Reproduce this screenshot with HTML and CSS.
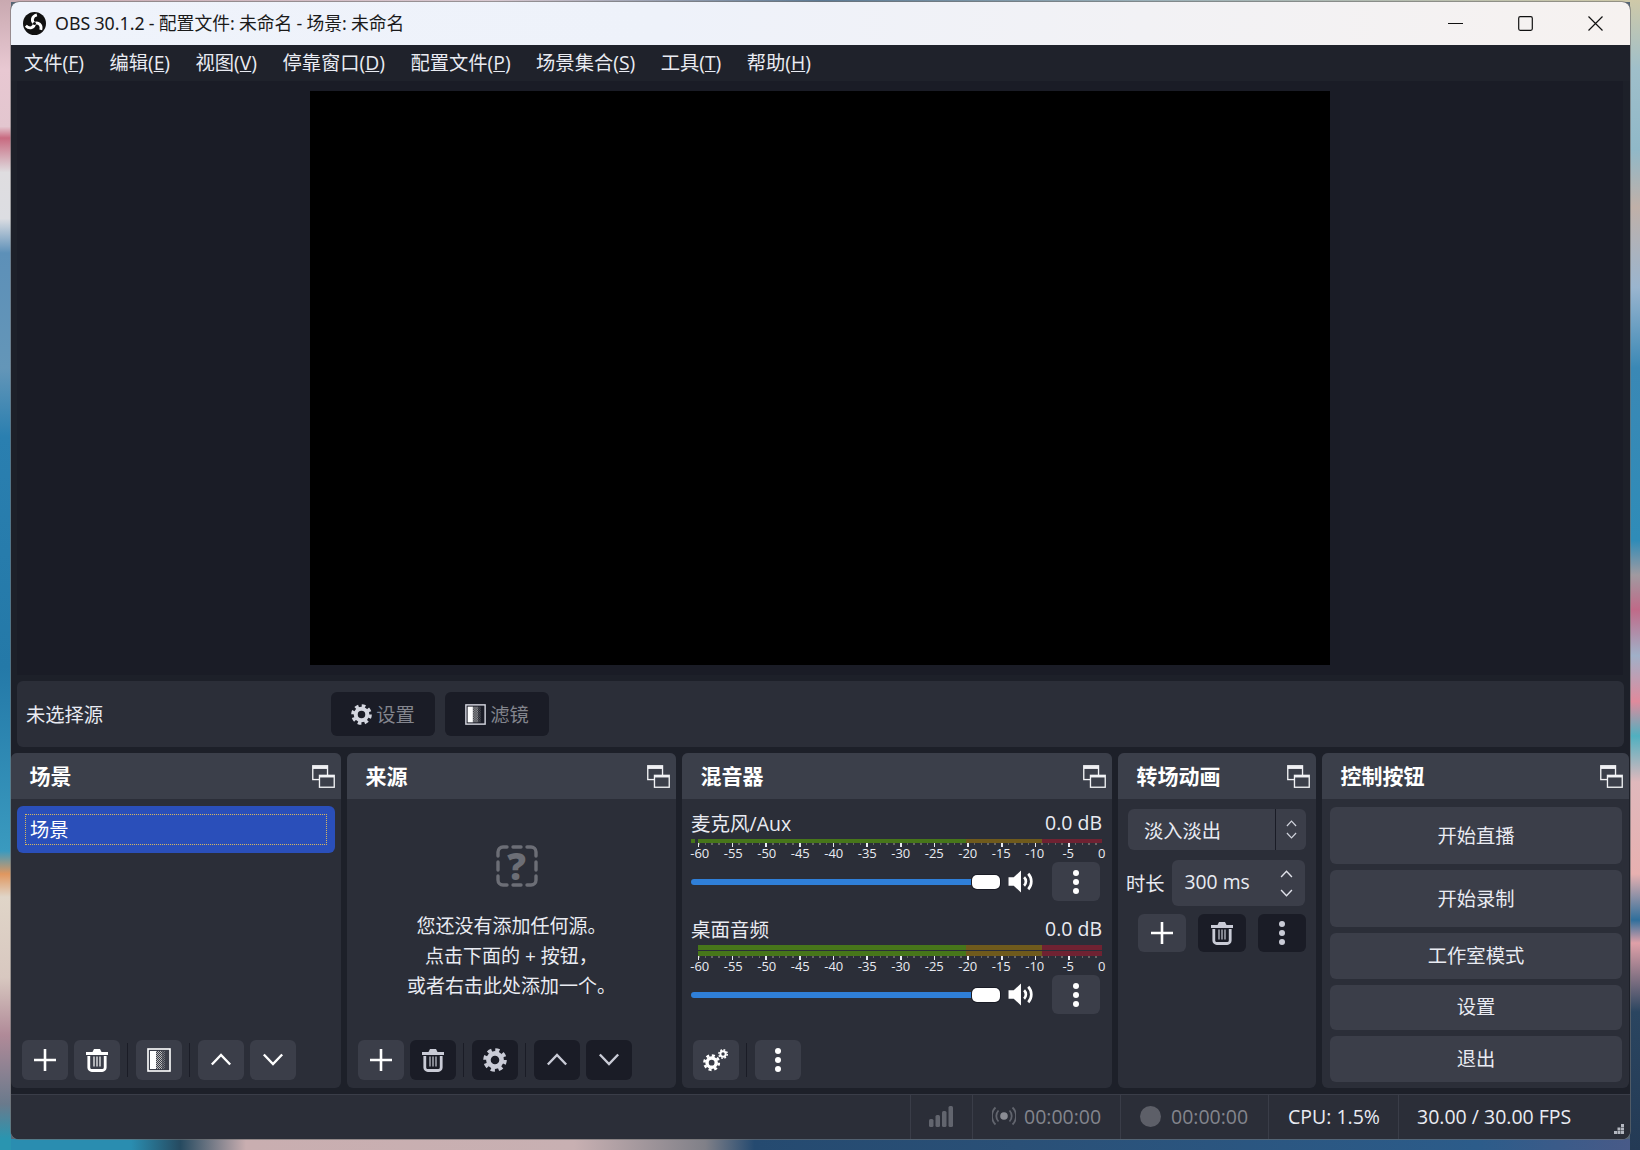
FILE: index.html
```html
<!DOCTYPE html>
<html lang="zh-CN">

<head>
    <meta charset="UTF-8">
    <title>OBS 30.1.2</title>
    <link rel="stylesheet" href="styles.css">
</head>

<body>
    <svg class="defs" width="0" height="0">
        <defs>
            <symbol id="i-plus" viewBox="0 0 24 24"><path d="M12 1v22M1 12h22" fill="none" stroke="currentColor" stroke-width="2.6"/></symbol>
            <symbol id="i-up" viewBox="0 0 24 14"><path d="M2 12.5 12 2l10 10.5" fill="none" stroke="currentColor" stroke-width="2.6"/></symbol>
            <symbol id="i-down" viewBox="0 0 24 14"><path d="M2 1.5 12 12 22 1.5" fill="none" stroke="currentColor" stroke-width="2.6"/></symbol>
            <symbol id="i-trash" viewBox="0 0 24 24">
                <path d="M1 5.500h22" stroke="currentColor" stroke-width="3" fill="none"/>
                <path d="M7.500 4 9 1h6l1.500 3" fill="currentColor"/>
                <path d="M3.800 8v11.500a3 3 0 0 0 3 3h10.400a3 3 0 0 0 3-3V8" stroke="currentColor" stroke-width="2.800" fill="none"/>
                <path d="M9 8.500v10M12 8.500v10M15 8.500v10" stroke="currentColor" stroke-width="1.200" fill="none"/>
            </symbol>
            <symbol id="i-gear" viewBox="0 0 24 24">
                <circle cx="12" cy="12" r="6.6" fill="none" stroke="currentColor" stroke-width="4.6"/>
                <circle cx="12" cy="12" r="10" fill="none" stroke="currentColor" stroke-width="3.6" stroke-dasharray="4.2 3.65"/>
            </symbol>
            <symbol id="i-gears" viewBox="0 0 26 24">
                <g transform="translate(0 6) scale(.72)">
                    <circle cx="12" cy="12" r="6.4" fill="none" stroke="currentColor" stroke-width="4.8"/>
                    <circle cx="12" cy="12" r="10" fill="none" stroke="currentColor" stroke-width="3.6" stroke-dasharray="4.2 3.65"/>
                </g>
                <g transform="translate(15 1) scale(.42)">
                    <circle cx="12" cy="12" r="6.4" fill="none" stroke="currentColor" stroke-width="4.8"/>
                    <circle cx="12" cy="12" r="10" fill="none" stroke="currentColor" stroke-width="3.6" stroke-dasharray="4.2 3.65"/>
                </g>
            </symbol>
            <pattern id="dither" width="2" height="2" patternUnits="userSpaceOnUse">
                <rect width="1" height="1" fill="#bbb"/>
                <rect x="1" y="1" width="1" height="1" fill="#bbb"/>
            </pattern>
            <symbol id="i-filter" viewBox="0 0 24 24">
                <rect x="1" y="1" width="22" height="22" fill="none" stroke="currentColor" stroke-width="1.600"/>
                <rect x="3" y="3" width="6" height="18" fill="#fff"/>
                <rect x="9" y="3" width="6" height="18" fill="url(#dither)"/>
                <rect x="15" y="3" width="3" height="18" fill="url(#dither)" opacity=".4"/>
            </symbol>
            <symbol id="i-dots" viewBox="0 0 8 26">
                <circle cx="4" cy="4" r="3" fill="currentColor"/>
                <circle cx="4" cy="13" r="3" fill="currentColor"/>
                <circle cx="4" cy="22" r="3" fill="currentColor"/>
            </symbol>
            <symbol id="i-float" viewBox="0 0 24 24">
                <rect x=".8" y=".8" width="15.4" height="14.4" fill="none" stroke="currentColor" stroke-width="1.4"/>
                <path d="M1 2.6h15" stroke="currentColor" stroke-width="3"/>
                <rect x="7.8" y="10.8" width="15.4" height="12.4" fill="#3b3f4a" stroke="currentColor" stroke-width="1.4"/>
                <path d="M8 12h15" stroke="currentColor" stroke-width="2"/>
            </symbol>
            <symbol id="i-speaker" viewBox="0 0 26 22">
                <path d="M.5 7h5L12.500.5v21L5.500 15h-5z" fill="currentColor"/>
                <path d="M15.500 7a5.500 5.500 0 0 1 0 8M19.500 3.500a11 11 0 0 1 0 15" fill="none" stroke="currentColor" stroke-width="2.600"/>
            </symbol>
        </defs>
    </svg>

    <div class="window">
        <div class="titlebar">
            <svg class="logo" viewBox="0 0 24 24">
                <circle cx="12" cy="12" r="12" fill="#111"/>
                <g fill="none" stroke="#fff" stroke-width="3">
                    <path d="M12 12C8.500 9.500 9 4.500 14.500 3"/>
                    <path d="M12 12C8.500 9.500 9 4.500 14.500 3" transform="rotate(120 12 12)"/>
                    <path d="M12 12C8.500 9.500 9 4.500 14.500 3" transform="rotate(240 12 12)"/>
                </g>
                <circle cx="12" cy="12" r="1.600" fill="#111"/>
            </svg>
            <span class="title-text">OBS 30.1.2 - 配置文件: 未命名 - 场景: 未命名</span>
            <div class="win-controls">
                <div class="win-btn"><svg width="15" height="15" viewBox="0 0 15 15"><path d="M0 7.500h15" stroke="#111" stroke-width="1"/></svg></div>
                <div class="win-btn"><svg width="15" height="15" viewBox="0 0 15 15"><rect x=".7" y=".7" width="13.600" height="13.600" rx="1.500" fill="none" stroke="#111" stroke-width="1.200"/></svg></div>
                <div class="win-btn"><svg width="15" height="15" viewBox="0 0 15 15"><path d="M.5.500l14 14M14.500.500l-14 14" stroke="#111" stroke-width="1.200"/></svg></div>
            </div>
        </div>

        <div class="menubar">
            <span>文件(<u>F</u>)</span>
            <span>编辑(<u>E</u>)</span>
            <span>视图(<u>V</u>)</span>
            <span>停靠窗口(<u>D</u>)</span>
            <span>配置文件(<u>P</u>)</span>
            <span>场景集合(<u>S</u>)</span>
            <span>工具(<u>T</u>)</span>
            <span>帮助(<u>H</u>)</span>
        </div>

        <div class="content">
            <div class="preview-dock">
                <div class="preview"></div>
            </div>

            <div class="context-bar">
                <div class="context-label">未选择源</div>
                <div class="context-btn"><svg class="ico-md"><use href="#i-gear"/></svg>设置</div>
                <div class="context-btn"><svg class="ico-md"><use href="#i-filter"/></svg>滤镜</div>
            </div>

            <div class="docks">
                <section class="dock dock-scenes">
                    <header class="dock-head"><span>场景</span><svg class="ico-float"><use href="#i-float"/></svg></header>
                    <div class="dock-body scenes-body">
                        <div class="scene-item"><div class="scene-focus">场景</div></div>
                    </div>
                    <div class="toolbar">
                        <div class="tool-btn"><svg class="ico-tool"><use href="#i-plus"/></svg></div>
                        <div class="tool-btn"><svg class="ico-tool"><use href="#i-trash"/></svg></div>
                        <div class="tool-sep"></div>
                        <div class="tool-btn"><svg class="ico-tool"><use href="#i-filter"/></svg></div>
                        <div class="tool-sep"></div>
                        <div class="tool-btn"><svg class="ico-chev"><use href="#i-up"/></svg></div>
                        <div class="tool-btn"><svg class="ico-chev"><use href="#i-down"/></svg></div>
                    </div>
                </section>

                <section class="dock dock-sources">
                    <header class="dock-head"><span>来源</span><svg class="ico-float"><use href="#i-float"/></svg></header>
                    <div class="dock-body sources-body">
                        <div class="empty-icon">
                            <svg viewBox="0 0 42 42">
                                <g fill="none" stroke="#6c6e76" stroke-width="3.400" stroke-linecap="round">
                                    <path d="M2 11V7a5 5 0 0 1 5-5h4M31 2h4a5 5 0 0 1 5 5v4M40 31v4a5 5 0 0 1-5 5h-4M11 40H7a5 5 0 0 1-5-5v-4"/>
                                    <path d="M17 2h8M17 40h8M2 17v8M40 17v8"/>
                                </g>
                            </svg>
                            <span class="empty-mark">?</span>
                        </div>
                        <p class="empty-text">您还没有添加任何源。<br>点击下面的 + 按钮，<br>或者右击此处添加一个。</p>
                    </div>
                    <div class="toolbar">
                        <div class="tool-btn"><svg class="ico-tool"><use href="#i-plus"/></svg></div>
                        <div class="tool-btn off"><svg class="ico-tool"><use href="#i-trash"/></svg></div>
                        <div class="tool-sep"></div>
                        <div class="tool-btn off"><svg class="ico-tool"><use href="#i-gear"/></svg></div>
                        <div class="tool-sep"></div>
                        <div class="tool-btn off"><svg class="ico-chev"><use href="#i-up"/></svg></div>
                        <div class="tool-btn off"><svg class="ico-chev"><use href="#i-down"/></svg></div>
                    </div>
                </section>

                <section class="dock dock-mixer">
                    <header class="dock-head"><span>混音器</span><svg class="ico-float"><use href="#i-float"/></svg></header>
                    <div class="dock-body mixer-body">
                        <div class="strip">
                            <div class="strip-name"><span>麦克风/Aux</span><span>0.0 dB</span></div>
                            <div class="meter mono">
                                <div class="meter-row"><i class="stub"></i><i class="seg-g"></i><i class="seg-y"></i><i class="seg-r"></i></div>
                            </div>
                            <div class="ticks"></div>
                            <div class="scale"><span>-60</span><span>-55</span><span>-50</span><span>-45</span><span>-40</span><span>-35</span><span>-30</span><span>-25</span><span>-20</span><span>-15</span><span>-10</span><span>-5</span><span>0</span></div>
                            <div class="strip-ctrl">
                                <div class="slider"><div class="track"></div><div class="handle"></div></div>
                                <svg class="ico-speaker"><use href="#i-speaker"/></svg>
                                <div class="tool-btn strip-menu"><svg class="ico-dots"><use href="#i-dots"/></svg></div>
                            </div>
                        </div>
                        <div class="strip">
                            <div class="strip-name"><span>桌面音频</span><span>0.0 dB</span></div>
                            <div class="meter">
                                <div class="meter-row"><i class="seg-g"></i><i class="seg-y"></i><i class="seg-r"></i></div>
                                <div class="meter-row"><i class="seg-g"></i><i class="seg-y"></i><i class="seg-r"></i></div>
                            </div>
                            <div class="ticks"></div>
                            <div class="scale"><span>-60</span><span>-55</span><span>-50</span><span>-45</span><span>-40</span><span>-35</span><span>-30</span><span>-25</span><span>-20</span><span>-15</span><span>-10</span><span>-5</span><span>0</span></div>
                            <div class="strip-ctrl">
                                <div class="slider"><div class="track"></div><div class="handle"></div></div>
                                <svg class="ico-speaker"><use href="#i-speaker"/></svg>
                                <div class="tool-btn strip-menu"><svg class="ico-dots"><use href="#i-dots"/></svg></div>
                            </div>
                        </div>
                    </div>
                    <div class="toolbar">
                        <div class="tool-btn"><svg class="ico-gears"><use href="#i-gears"/></svg></div>
                        <div class="tool-sep"></div>
                        <div class="tool-btn"><svg class="ico-dots"><use href="#i-dots"/></svg></div>
                    </div>
                </section>

                <section class="dock dock-transitions">
                    <header class="dock-head"><span>转场动画</span><svg class="ico-float"><use href="#i-float"/></svg></header>
                    <div class="dock-body transitions-body">
                        <div class="combo">
                            <div class="combo-text">淡入淡出</div>
                            <div class="combo-arrows">
                                <svg class="ico-tiny"><use href="#i-up"/></svg>
                                <svg class="ico-tiny"><use href="#i-down"/></svg>
                            </div>
                        </div>
                        <div class="duration">
                            <span>时长</span>
                            <div class="spin">
                                <div class="spin-text">300 ms</div>
                                <div class="spin-arrows">
                                    <svg class="ico-small"><use href="#i-up"/></svg>
                                    <svg class="ico-small"><use href="#i-down"/></svg>
                                </div>
                            </div>
                        </div>
                        <div class="transition-tools">
                            <div class="tool-btn"><svg class="ico-tool"><use href="#i-plus"/></svg></div>
                            <div class="tool-btn off"><svg class="ico-tool"><use href="#i-trash"/></svg></div>
                            <div class="tool-btn off"><svg class="ico-dots"><use href="#i-dots"/></svg></div>
                        </div>
                    </div>
                </section>

                <section class="dock dock-controls">
                    <header class="dock-head"><span>控制按钮</span><svg class="ico-float"><use href="#i-float"/></svg></header>
                    <div class="dock-body controls-body">
                        <div class="ctrl-btn tall">开始直播</div>
                        <div class="ctrl-btn tall">开始录制</div>
                        <div class="ctrl-btn">工作室模式</div>
                        <div class="ctrl-btn">设置</div>
                        <div class="ctrl-btn">退出</div>
                    </div>
                </section>
            </div>

            <div class="statusbar">
                <div class="stat stat-bars">
                    <svg width="24" height="21" viewBox="0 0 24 21" fill="#62656e">
                        <rect x="0" y="13" width="4.500" height="8" rx="1.500"/>
                        <rect x="6.500" y="9" width="4.500" height="12" rx="1.500"/>
                        <rect x="13" y="5" width="4.500" height="16" rx="1.500"/>
                        <rect x="19.500" y="0" width="4.500" height="21" rx="1.500"/>
                    </svg>
                </div>
                <div class="stat stat-time dim">
                    <svg width="24" height="22" viewBox="0 0 24 22" fill="none" stroke="#62656e" stroke-width="1.800">
                        <circle cx="12" cy="11" r="3.800" fill="#8a8c94" stroke="none"/>
                        <path d="M6.500 5.500a8 8 0 0 0 0 11M17.500 5.500a8 8 0 0 1 0 11M3.500 2.500a12 12 0 0 0 0 17M20.500 2.500a12 12 0 0 1 0 17"/>
                    </svg>
                    <span>00:00:00</span>
                </div>
                <div class="stat stat-time dim">
                    <div class="rec-dot"></div>
                    <span>00:00:00</span>
                </div>
                <div class="stat stat-cpu">CPU: 1.5%</div>
                <div class="stat stat-fps">30.00 / 30.00 FPS</div>
                <svg class="grip" width="10" height="10" viewBox="0 0 10 10" fill="#b4b7c0">
                    <rect x="7" y="0" width="3" height="3"/>
                    <rect x="3.500" y="3.500" width="3" height="3"/><rect x="7" y="3.500" width="3" height="3"/>
                    <rect x="0" y="7" width="3" height="3"/><rect x="3.500" y="7" width="3" height="3"/><rect x="7" y="7" width="3" height="3"/>
                </svg>
            </div>
        </div>
    </div>
</body>

</html>
```

FILE: styles.css
```css
* {
    box-sizing: border-box;
}

html,
body {
    margin: 0;
    height: 100%;
    overflow: hidden;
}

/* desktop wallpaper, only the strips round the window show */
body {
    padding: 2px 10px 0 11px;
    font-family: "Open Sans", "Noto Sans CJK SC", sans-serif;
    font-size: 19.3px;
    color: #e9ebf2;
    background-color: #567;
    background-image:
        linear-gradient(180deg, #c9a9b0 0, #e8c8d2 6%, #e3c6cf 11%, #c86a80 12%, #dfdde0 15%, #dcdde2 19%, #5d90b8 22%, #6496b8 32%, #2a7fb0 38%, #2479a8 58%, #3a9abf 74%, #e0975f 76%, #e0d5c8 78%, #d8c8c0 85%, #b08a98 90%, #6a7a8c 96%, #2a95b0 99%),
        linear-gradient(180deg, #cfc9a8 0, #9fbfca 6%, #90b8c8 13%, #c0b0a8 18%, #9ab5cf 25%, #3a88b5 32%, #2f8cb8 47%, #a09aa0 50%, #c06a88 53%, #a0b0c8 57%, #e08a9c 61%, #50b0c0 64%, #e0b8bc 68%, #e8b0b0 76%, #2f6f9c 80%, #e0a0a8 82%, #2a4560 88%, #243a55 100%),
        linear-gradient(90deg, #2a8db0 0, #2a8db0 8%, #264a60 11%, #c9aeb0 15%, #c8b0b2 35%, #808088 43%, #254a70 46%, #2a5077 62%, #2c5c8a 90%, #4a5a88 100%),
        linear-gradient(90deg, #c9a9b0, #d8c8d0 30%, #5c7a94 50%, #9ab0b8 70%, #cfc9a8);
    background-size: 11px 100%, 10px 100%, 100% 11px, 100% 2px;
    background-position: left top, right top, left bottom, left top;
    background-repeat: no-repeat;
}

.defs {
    position: absolute;
}

.window {
    width: 1619px;
    height: 1137px;
    display: flex;
    flex-direction: column;
    overflow: hidden;
    border-radius: 8px;
    background-color: #1d2029;
    box-shadow: 0 0 0 1px rgba(110, 110, 110, 0.6);
}

.titlebar {
    height: 43px;
    flex: none;
    display: flex;
    align-items: center;
    padding-left: 12px;
    background: linear-gradient(90deg, #eff3fb, #eef2fa 40%, #f6f2f0);
    color: #1a1a1a;
}

.logo {
    width: 23px;
    height: 23px;
    margin-right: 9px;
}

.title-text {
    padding-bottom: 4px;
    font-size: 17.8px;
    word-spacing: -0.4px;
    font-family: "Noto Sans", "Noto Sans CJK SC", sans-serif;
}

.win-controls {
    margin-left: auto;
    display: flex;
}

.win-btn {
    width: 70px;
    height: 43px;
    display: flex;
    align-items: center;
    justify-content: center;
}

.menubar {
    height: 36px;
    flex: none;
    display: flex;
    align-items: center;
    gap: 25.5px;
    padding: 0 0 2px 13px;
    background-color: #1f222b;
    white-space: nowrap;
}

.content {
    flex: 1;
    display: flex;
    flex-direction: column;
    gap: 6px;
}

.preview-dock {
    height: 594px;
    margin: 0 7px 0 6px;
    display: flex;
    justify-content: center;
    align-items: center;
    background-color: #1a1c26;
}

.preview {
    width: 1020px;
    height: 574px;
    background-color: #000;
}

.context-bar {
    height: 66px;
    margin: 0 6px;
    padding-left: 9px;
    display: flex;
    align-items: center;
    gap: 10px;
    border-radius: 6px;
    background-color: #2b2e38;
}

.context-label {
    width: 295px;
}

.context-btn {
    width: 104px;
    height: 44px;
    display: flex;
    align-items: center;
    justify-content: center;
    gap: 4px;
    border-radius: 6px;
    background-color: #1a1c26;
    color: #83858d;
}

.ico-md {
    width: 21px;
    height: 21px;
    color: #d5d7e0;
}

.docks {
    height: 335px;
    display: flex;
    gap: 6px;
}

.dock {
    display: flex;
    flex-direction: column;
    overflow: hidden;
    border-radius: 6px;
    background-color: #2b2e38;
}

.dock-scenes {
    width: 330px;
}

.dock-sources {
    width: 329px;
}

.dock-mixer {
    width: 430px;
}

.dock-transitions {
    width: 198px;
}

.dock-controls {
    width: 307px;
}

.dock-head {
    height: 46px;
    flex: none;
    display: flex;
    align-items: center;
    justify-content: space-between;
    padding: 0 6.5px 2px 18.5px;
    background-color: #3b3f4a;
    font-size: 21px;
    font-weight: 700;
    color: #fff;
}

.ico-float {
    width: 23px;
    height: 23px;
    margin-top: 2px;
    color: #f2f3f6;
}

.dock-body {
    flex: 1;
    min-height: 0;
}

.toolbar {
    flex: none;
    height: 48px;
    padding: 0 0 8px 10.5px;
    display: flex;
    align-items: center;
    gap: 6px;
}

.tool-btn {
    width: 46px;
    height: 40px;
    display: flex;
    align-items: center;
    justify-content: center;
    border-radius: 6px;
    background-color: #3b3e49;
    color: #fff;
}

.tool-btn.off {
    background-color: #1a1c26;
    color: #c9cbd6;
}

.tool-sep {
    width: 1px;
    height: 34px;
    margin: 0 1.5px;
    background-color: #1a1c26;
}

.ico-tool {
    width: 24px;
    height: 24px;
    margin-bottom: 1px;
}

.ico-chev {
    width: 22px;
    height: 13px;
    margin-bottom: 2px;
}

.ico-dots {
    width: 8px;
    height: 26px;
}

.ico-gears {
    width: 26px;
    height: 24px;
}

.scenes-body {
    padding: 7px 6px 0;
}

.scene-item {
    height: 47px;
    padding: 9px;
    border-radius: 6px;
    background-color: #2a4fba;
}

.scene-focus {
    height: 100%;
    padding: 0 0 2px 4px;
    display: flex;
    align-items: center;
    outline: 1px dotted #d8b860;
    color: #fff;
}

.sources-body {
    display: flex;
    flex-direction: column;
    align-items: center;
    padding-top: 46px;
    font-size: 19px;
}

.empty-icon {
    width: 42px;
    height: 42px;
    margin-left: 10px;
    flex: none;
    display: grid;
    place-items: center;
}

.empty-icon svg,
.empty-mark {
    grid-area: 1 / 1;
}

.empty-icon svg {
    width: 42px;
    height: 42px;
}

.empty-mark {
    font-size: 37px;
    line-height: 42px;
    font-weight: 800;
    color: #6c6e76;
}

.empty-text {
    margin: 24px 0 0;
    text-align: center;
    line-height: 30px;
}

.mixer-body {
    padding: 10px 10px 0 9px;
    display: flex;
    flex-direction: column;
    gap: 14px;
}

.strip-name {
    height: 30px;
    padding-bottom: 3px;
    display: flex;
    align-items: center;
    justify-content: space-between;
    font-size: 19.5px;
}

.meter {
    padding-left: 7px;
    display: flex;
    flex-direction: column;
    gap: 1px;
}

.meter.mono {
    padding-left: 0;
}

.meter-row {
    height: 5px;
    display: flex;
}

.mono .meter-row {
    height: 4px;
}

.stub {
    width: 4px;
    margin-right: 3px;
    background-color: #47761a;
}

.seg-g {
    width: 269px;
    background-color: #47761a;
}

.seg-y {
    width: 76px;
    background-color: #6f5a1c;
}

.seg-r {
    width: 60px;
    background-color: #6f2232;
}

.ticks {
    height: 4px;
    margin-left: 7px;
    background-image:
        repeating-linear-gradient(90deg, #e9ebf2 0, #e9ebf2 1.5px, transparent 1.5px, transparent 33.67px),
        repeating-linear-gradient(90deg, #666 0, #666 1.5px, transparent 1.5px, transparent 6.73px);
    background-size: 100% 100%, 100% 50%;
    background-repeat: no-repeat;
}

/* one equal cell per 5 dB, centred under its tick */
.scale {
    height: 14px;
    margin-left: -8px;
    padding-bottom: 1px;
    display: flex;
    align-items: center;
    font-size: 13px;
    line-height: 13px;
}

.scale span {
    flex: none;
    width: 33.5px;
    text-align: center;
}

.strip-ctrl {
    height: 39px;
    margin-top: 1px;
    display: flex;
    align-items: center;
}

.slider {
    width: 309px;
    display: flex;
    align-items: center;
}

.track {
    flex: 1;
    height: 6px;
    border-radius: 3px 0 0 3px;
    background-color: #2f7fd8;
}

.handle {
    width: 28px;
    height: 14px;
    border-radius: 5px;
    background-color: #fff;
    box-shadow: 0 0 0 1px #1a1c26;
}

.ico-speaker {
    width: 27px;
    height: 23px;
    margin-left: 8px;
    color: #fff;
}

.strip-menu {
    width: 48px;
    height: 39px;
    margin-left: 17px;
}

.transitions-body {
    padding: 10px 10px 0 8px;
    display: flex;
    flex-direction: column;
}

.combo {
    height: 41px;
    margin-left: 2px;
    display: flex;
    border-radius: 6px;
    background-color: #3b3e49;
}

.combo-text {
    flex: 1;
    padding-left: 16px;
    display: flex;
    align-items: center;
}

.combo-arrows {
    width: 31px;
    display: flex;
    flex-direction: column;
    align-items: center;
    justify-content: center;
    gap: 5px;
    border-left: 1px solid #1a1c26;
    color: #d0d3dc;
}

.ico-tiny {
    width: 11px;
    height: 7px;
}

.duration {
    height: 46px;
    margin-top: 10px;
    display: flex;
    align-items: center;
    gap: 7px;
}

.spin {
    width: 133px;
    height: 46px;
    display: flex;
    align-items: center;
    padding-left: 13px;
    border-radius: 6px;
    background-color: #3b3e49;
}

.spin-text {
    flex: 1;
    padding-bottom: 3px;
}

.spin-arrows {
    width: 36px;
    display: flex;
    flex-direction: column;
    align-items: center;
    gap: 11px;
    color: #e0e2ea;
}

.ico-small {
    width: 13px;
    height: 8px;
}

.transition-tools {
    margin-top: 8px;
    padding-left: 12px;
    display: flex;
    gap: 12px;
}

.transition-tools .tool-btn {
    width: 48px;
    height: 38px;
}

.controls-body {
    padding: 8px 7px 0 8px;
    display: flex;
    flex-direction: column;
    gap: 6px;
}

.ctrl-btn {
    height: 45.5px;
    padding-bottom: 2px;
    display: flex;
    align-items: center;
    justify-content: center;
    border-radius: 6px;
    background-color: #3b3e49;
}

.ctrl-btn.tall {
    height: 57px;
}

.statusbar {
    position: relative;
    height: 45px;
    display: flex;
    padding-left: 899px;
    border-top: 1px solid #3a3d48;
    background-color: #2b2e38;
    font-size: 19.5px;
}

.stat {
    display: flex;
    align-items: center;
    padding-bottom: 2px;
    border-left: 1px solid #3a3d48;
}

.stat-bars {
    width: 62px;
    padding-left: 18px;
}

.stat-time {
    width: 148px;
    padding-left: 19px;
    gap: 8px;
}

.dim {
    color: #83858d;
}

.rec-dot {
    width: 21px;
    height: 21px;
    margin-right: 2px;
    border-radius: 50%;
    background-color: #5d5f68;
}

.stat-cpu {
    width: 130px;
    padding-left: 19px;
}

.stat-fps {
    flex: 1;
    padding-left: 18px;
}

.grip {
    position: absolute;
    right: 6px;
    bottom: 5px;
}
```
